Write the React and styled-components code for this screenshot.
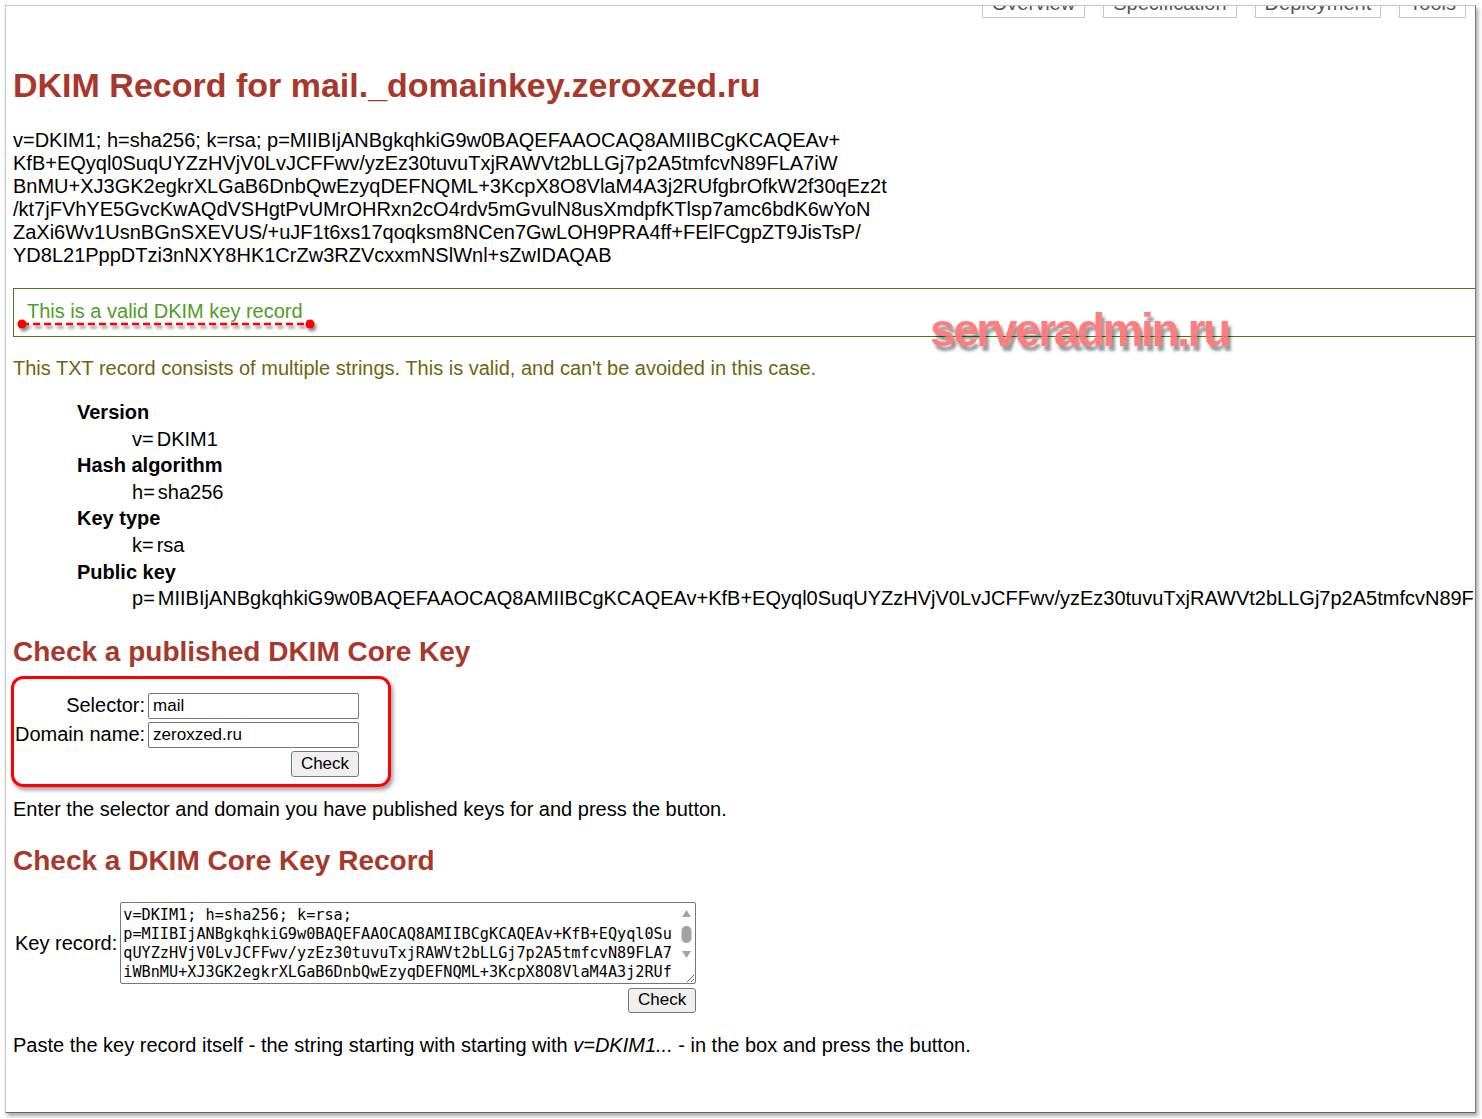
import styled, { createGlobalStyle } from "styled-components";

const GlobalStyle = createGlobalStyle`
  body {
    margin: 0;
    background: #fff;
    font-family: "Liberation Sans", Arial, sans-serif;
  }
`;

const KEY =
  "MIIBIjANBgkqhkiG9w0BAQEFAAOCAQ8AMIIBCgKCAQEAv+KfB+EQyql0SuqUYZzHVjV0LvJCFFwv/yzEz30tuvuTxjRAWVt2bLLGj7p2A5tmfcvN89FLA7iWBnMU+XJ3GK2egkrXLGaB6DnbQwEzyqDEFNQML+3KcpX8O8VlaM4A3j2RUfgbrOfkW2f30qEz2t/kt7jFVhYE5GvcKwAQdVSHgtPvUMrOHRxn2cO4rdv5mGvulN8usXmdpfKTlsp7amc6bdK6wYoNZaXi6Wv1UsnBGnSXEVUS/+uJF1t6xs17qoqksm8NCen7GwLOH9PRA4ff+FElFCgpZT9JisTsP/YD8L21PppDTzi3nNXY8HK1CrZw3RZVcxxmNSlWnl+sZwIDAQAB";

const recordLines = [
  "v=DKIM1; h=sha256; k=rsa; p=MIIBIjANBgkqhkiG9w0BAQEFAAOCAQ8AMIIBCgKCAQEAv+",
  "KfB+EQyql0SuqUYZzHVjV0LvJCFFwv/yzEz30tuvuTxjRAWVt2bLLGj7p2A5tmfcvN89FLA7iW",
  "BnMU+XJ3GK2egkrXLGaB6DnbQwEzyqDEFNQML+3KcpX8O8VlaM4A3j2RUfgbrOfkW2f30qEz2t",
  "/kt7jFVhYE5GvcKwAQdVSHgtPvUMrOHRxn2cO4rdv5mGvulN8usXmdpfKTlsp7amc6bdK6wYoN",
  "ZaXi6Wv1UsnBGnSXEVUS/+uJF1t6xs17qoqksm8NCen7GwLOH9PRA4ff+FElFCgpZT9JisTsP/",
  "YD8L21PppDTzi3nNXY8HK1CrZw3RZVcxxmNSlWnl+sZwIDAQAB",
];

const tags = [
  { name: "Version", tag: "v", value: "DKIM1" },
  { name: "Hash algorithm", tag: "h", value: "sha256" },
  { name: "Key type", tag: "k", value: "rsa" },
  { name: "Public key", tag: "p", value: KEY },
];

const tabs = ["Overview", "Specification", "Deployment", "Tools"];

export default function App() {
  return (
    <>
      <GlobalStyle />
      <Frame>
        <Tabs>
          {tabs.map((t) => (
            <Tab key={t}>{t}</Tab>
          ))}
        </Tabs>

        <Title>DKIM Record for mail._domainkey.zeroxzed.ru</Title>

        <Record>
          {recordLines.map((l, i) => (
            <div key={i}>{l}</div>
          ))}
        </Record>

        <ValidBox>
          This is a valid DKIM key record
          <Underline width="300" height="14" viewBox="0 0 300 14">
            <defs>
              <filter id="sh" x="-5%" y="-50%" width="110%" height="250%">
                <feDropShadow dx="2" dy="3" stdDeviation="1.5" floodColor="#000" floodOpacity="0.45" />
              </filter>
            </defs>
            <g filter="url(#sh)">
              <line x1="6" y1="6" x2="294" y2="6" stroke="#ff0000" strokeWidth="2.5" strokeDasharray="7 4" />
              <circle cx="6" cy="6" r="4.5" fill="#ff0000" />
              <circle cx="294" cy="6" r="4.5" fill="#ff0000" />
            </g>
          </Underline>
        </ValidBox>

        <Note>
          This TXT record consists of multiple strings. This is valid, and can't be avoided in this case.
        </Note>

        <TagList>
          {tags.map((t) => (
            <div key={t.tag}>
              <dt>{t.name}</dt>
              <dd>
                <TagName>{t.tag}=</TagName>
                {t.value}
              </dd>
            </div>
          ))}
        </TagList>

        <Heading>Check a published DKIM Core Key</Heading>

        <LookupForm onSubmit={(e) => e.preventDefault()}>
          <Label htmlFor="sel">Selector:</Label>
          <Field id="sel" defaultValue="mail" />
          <Label htmlFor="dom">Domain name:</Label>
          <Field id="dom" defaultValue="zeroxzed.ru" />
          <Button type="submit">Check</Button>
          <Highlight />
        </LookupForm>

        <Text>Enter the selector and domain you have published keys for and press the button.</Text>

        <Heading>Check a DKIM Core Key Record</Heading>

        <RecordForm onSubmit={(e) => e.preventDefault()}>
          <Label htmlFor="rec">Key record:</Label>
          <AreaWrap>
            <KeyArea id="rec" defaultValue={"v=DKIM1; h=sha256; k=rsa; p=" + KEY} />
            <ScrollBar width="17" height="66" viewBox="0 0 17 66">
              <path d="M8.5 7 L13 14 L4 14 Z" fill="#a3a3a3" />
              <rect x="3.5" y="23" width="10" height="17" rx="5" fill="#a3a3a3" />
              <path d="M4 48 L13 48 L8.5 55 Z" fill="#a3a3a3" />
            </ScrollBar>
          </AreaWrap>
          <Button type="submit" $small>
            Check
          </Button>
        </RecordForm>

        <Text>
          Paste the key record itself - the string starting with starting with <i>v=DKIM1...</i> - in the box
          and press the button.
        </Text>

        <Watermark>serveradmin.ru</Watermark>
      </Frame>
    </>
  );
}

const Frame = styled.div`
  position: relative;
  box-sizing: border-box;
  margin: 5px;
  width: 1471px;
  height: 1108px;
  padding: 0 7px;
  overflow: hidden;
  background: #fff;
  border: 1px solid #c6c6c6;
  border-right-color: #777;
  border-bottom-color: #666;
  box-shadow: 2px 3px 4px rgba(0, 0, 0, 0.35);
  font-size: 20px;
  color: #000;
`;

const Tabs = styled.nav`
  display: flex;
  justify-content: flex-end;
  gap: 18px;
  margin: -16px 2px 0 0;
`;

const Tab = styled.a`
  display: block;
  padding: 0 9px 2px;
  line-height: 24px;
  border: 1px solid #c9c9c9;
  color: #555;
  font-size: 20px;
`;

const Title = styled.h1`
  margin: 47px 0 0;
  font-size: 34px;
  line-height: 40px;
  font-weight: bold;
  color: #a8382c;
`;

const Record = styled.div`
  margin-top: 24px;
  line-height: 23px;
  white-space: nowrap;
`;

const ValidBox = styled.div`
  position: relative;
  margin: 21px -20px 0 0;
  padding: 11px 0 13px 13px;
  line-height: 23px;
  border: 1px solid #447a12;
  color: #4f9e26;
`;

const Underline = styled.svg`
  position: absolute;
  left: 2px;
  top: 29px;
  overflow: visible;
`;

const Note = styled.p`
  margin: 20px 0 0;
  line-height: 23px;
  color: #6f6510;
`;

const TagList = styled.dl`
  margin: 19px 0 0 64px;
  line-height: 26.6px;
  white-space: nowrap;

  dt {
    font-weight: bold;
  }

  dd {
    margin-left: 55px;
  }
`;

const TagName = styled.span`
  margin-right: 3px;
`;

const Heading = styled.h2`
  margin: 24px 0 0;
  font-size: 28px;
  line-height: 32px;
  font-weight: bold;
  color: #a8382c;
`;

const LookupForm = styled.form`
  position: relative;
  display: grid;
  grid-template-columns: auto 211px;
  gap: 3px;
  width: fit-content;
  margin-top: 25px;
  padding-left: 2px;
`;

const Label = styled.label`
  align-self: center;
  text-align: right;
  font-size: 20px;
`;

const Field = styled.input`
  box-sizing: border-box;
  height: 26px;
  padding: 1px 4px;
  border: 1px solid #767676;
  border-radius: 2px;
  font-family: "Liberation Sans", Arial, sans-serif;
  font-size: 17px;
  color: #000;
`;

const Button = styled.button`
  grid-column: 2;
  justify-self: end;
  box-sizing: border-box;
  height: ${(p) => (p.$small ? "25px" : "26px")};
  padding: 0 9px;
  border: 1px solid #767676;
  border-radius: 3px;
  background: #efefef;
  font-family: "Liberation Sans", Arial, sans-serif;
  font-size: 17px;
  color: #000;
`;

const Highlight = styled.div`
  position: absolute;
  left: -2px;
  top: -17px;
  right: -32px;
  bottom: -10px;
  border: 3px solid #ff0000;
  border-radius: 12px;
  box-shadow: 2px 3px 4px rgba(0, 0, 0, 0.4);
  pointer-events: none;
`;

const Text = styled.p`
  margin: 21px 0 0;
  line-height: 23px;
`;

const RecordForm = styled.form`
  display: grid;
  grid-template-columns: auto 576px;
  gap: 3px;
  width: fit-content;
  margin-top: 25px;
  padding-left: 2px;
`;

const AreaWrap = styled.div`
  position: relative;
  display: flex;
  padding-bottom: 1px;
`;

const KeyArea = styled.textarea`
  box-sizing: border-box;
  width: 576px;
  height: 82px;
  margin: 0;
  padding: 3px 19px 1px 2px;
  border: 1px solid #767676;
  border-radius: 2px;
  font-family: "DejaVu Sans Mono", "Liberation Mono", monospace;
  font-size: 15.2px;
  line-height: 19px;
  color: #000;
  overflow: hidden;
  resize: both;
`;

const ScrollBar = styled.svg`
  position: absolute;
  top: 1px;
  right: 1px;
  pointer-events: none;
`;

const Watermark = styled.div`
  position: absolute;
  left: 924px;
  top: 301px;
  font-family: "Liberation Sans", Arial, sans-serif;
  font-size: 46px;
  line-height: 1;
  font-weight: bold;
  letter-spacing: -2.4px;
  color: #ff6f6f;
  opacity: 0.9;
  text-shadow: 3px 5px 3px rgba(0, 0, 0, 0.45);
  pointer-events: none;
`;
